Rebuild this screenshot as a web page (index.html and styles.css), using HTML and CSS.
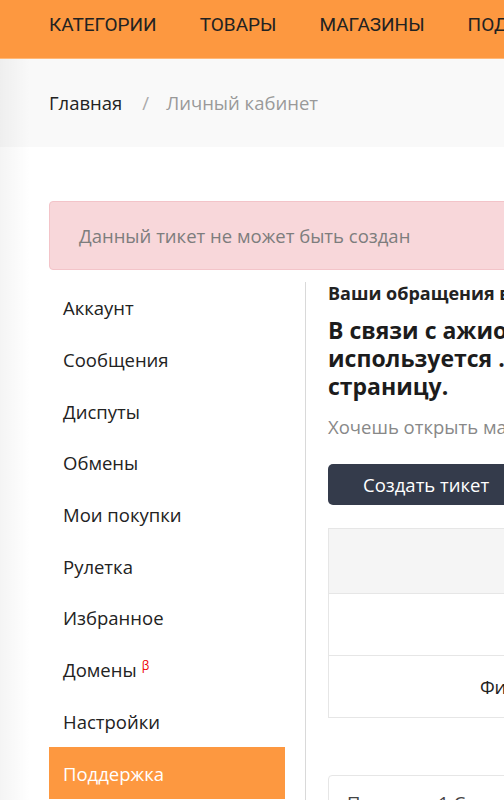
FILE: index.html
```html
<!DOCTYPE html>
<html lang="ru">
<head>
    <meta charset="UTF-8">
    <meta name="viewport" content="width=device-width, initial-scale=1.0">
    <title>Личный кабинет</title>
    <link rel="stylesheet" href="styles.css">
</head>
<body>
    <div class="page">
        <header class="topnav">
            <a href="#">Категории</a>
            <a href="#">Товары</a>
            <a href="#">Магазины</a>
            <a href="#">Подписки</a>
            <a href="#">Помощь</a>
        </header>

        <div class="below-nav">
            <div class="breadcrumbs">
                <a href="#" class="crumb">Главная</a>
                <span class="crumb-sep">/</span>
                <span class="crumb current">Личный кабинет</span>
            </div>

            <main class="main">
                <div class="alert">Данный тикет не может быть создан</div>

                <div class="cabinet">
                    <nav class="side-menu">
                        <a href="#">Аккаунт</a>
                        <a href="#">Сообщения</a>
                        <a href="#">Диспуты</a>
                        <a href="#">Обмены</a>
                        <a href="#">Мои покупки</a>
                        <a href="#">Рулетка</a>
                        <a href="#">Избранное</a>
                        <a href="#">Домены <sup class="beta">β</sup></a>
                        <a href="#">Настройки</a>
                        <a href="#" class="active">Поддержка</a>
                    </nav>

                    <section class="content">
                        <div class="content-title">Ваши обращения в службу поддержки</div>
                        <h2 class="notice">В связи с ажиотажем время ответа увеличено. Если ваш аккаунт<br>используется ... пожалуйста, обновите<br>страницу.</h2>
                        <p class="hint">Хочешь открыть магазин? Создай тикет в разделе «Магазины».</p>
                        <button class="btn-dark">Создать тикет</button>

                        <table class="tickets">
                            <thead>
                                <tr><th class="col-main">Тема</th><th>Статус</th><th>Дата</th><th>Действия</th></tr>
                            </thead>
                            <tbody>
                                <tr><td class="col-main"></td><td></td><td></td><td></td></tr>
                                <tr><td class="col-main">Фильтры</td><td>Все</td><td>—</td><td>—</td></tr>
                            </tbody>
                        </table>

                        <div class="info-box">Показано 1 Страница из 1</div>
                    </section>
                </div>
            </main>
        </div>
    </div>
</body>
</html>
```

FILE: styles.css
```css
body {
    margin: 0;
    padding: 0;
    font-family: "Open Sans", sans-serif;
    color: #222;
    overflow: hidden; /* page is wider than window */
}

a {
    color: inherit;
    text-decoration: none;
}

.page {
    width: 1200px;
}

.topnav {
    height: 59px;
    background-color: #fd9840;
    border-bottom: 1px solid #ffb878;
    display: flex;
    align-items: center;
    gap: 43px;
    padding: 0 0 10px 49px;
    box-sizing: border-box;
    font-family: Roboto, sans-serif;
}

.topnav a {
    font-size: 19px;
    text-transform: uppercase;
    color: #222;
}

.below-nav {
    position: relative;
}

/* soft shadow on the left edge */
.below-nav::before {
    content: "";
    position: absolute;
    left: 0;
    top: 0;
    bottom: 0;
    width: 30px;
    background: linear-gradient(to right, rgba(0, 0, 0, 0.045), rgba(0, 0, 0, 0));
    pointer-events: none;
}

.breadcrumbs {
    height: 88px;
    background-color: #f9f9f9;
    display: flex;
    align-items: center;
    padding: 0 0 2px 49px;
    box-sizing: border-box;
    font-size: 18.5px;
}

.crumb {
    color: #222;
}

.crumb-sep {
    color: #aaa;
    margin: 0 17px 0 20px;
}

.crumb.current {
    color: #999;
}

.main {
    padding: 54px 0 0 49px;
}

.alert {
    height: 69px;
    box-sizing: border-box;
    background-color: #f8d7da;
    border: 1px solid #f3c4c9;
    border-radius: 4px;
    display: flex;
    align-items: center;
    padding-left: 29px;
    font-size: 18.5px;
    color: #7d7d7d;
    margin-bottom: 12px;
}

.cabinet {
    display: flex;
}

.side-menu {
    width: 236px;
    margin-right: 20px;
    display: flex;
    flex-direction: column;
}

.side-menu a {
    height: 51.7px;
    display: flex;
    align-items: center;
    padding-left: 14px;
    font-size: 18.5px;
    color: #222;
}

.side-menu a.active {
    background-color: #fd9840;
    color: #fff;
}

.beta {
    color: #e00;
    font-size: 12px;
    margin-left: 5px;
    align-self: flex-start;
    margin-top: 13px;
}

.content {
    flex: 1;
    border-left: 1px solid #d9d9d9;
    padding-left: 22px;
    min-height: 600px;
}

.content-title {
    font-weight: bold;
    font-size: 18px;
    line-height: 22px;
    white-space: nowrap;
}

.notice {
    font-weight: bold;
    font-size: 23px;
    line-height: 28px;
    margin: 12px 0 0 0;
    white-space: nowrap;
    color: #1c1c1c;
}

.hint {
    font-size: 18.5px;
    line-height: 26px;
    color: #888;
    margin: 14px 0 0 0;
    white-space: nowrap;
}

.btn-dark {
    margin-top: 24px;
    height: 41px;
    padding: 0 35px;
    background-color: #343b4b;
    color: #fff;
    border: none;
    border-radius: 5px;
    font-family: "Open Sans", sans-serif;
    font-size: 18.5px;
}

.tickets {
    margin-top: 23px;
    width: 800px;
    border-collapse: collapse;
    border: 1px solid #e6e6e6;
    font-size: 18.5px;
}

.tickets th,
.tickets td {
    border-top: 1px solid #e6e6e6;
    text-align: center;
    font-weight: normal;
}

.tickets thead tr {
    height: 65px;
    background-color: #f5f5f5;
    color: #f5f5f5;
}

.tickets tbody tr {
    height: 62px;
}

.tickets .col-main {
    width: 382px;
}

.info-box {
    margin-top: 57px;
    width: 800px;
    border: 1px solid #e6e6e6;
    border-radius: 4px;
    padding: 14px 18px;
    font-size: 18.5px;
    color: #444;
}
```
